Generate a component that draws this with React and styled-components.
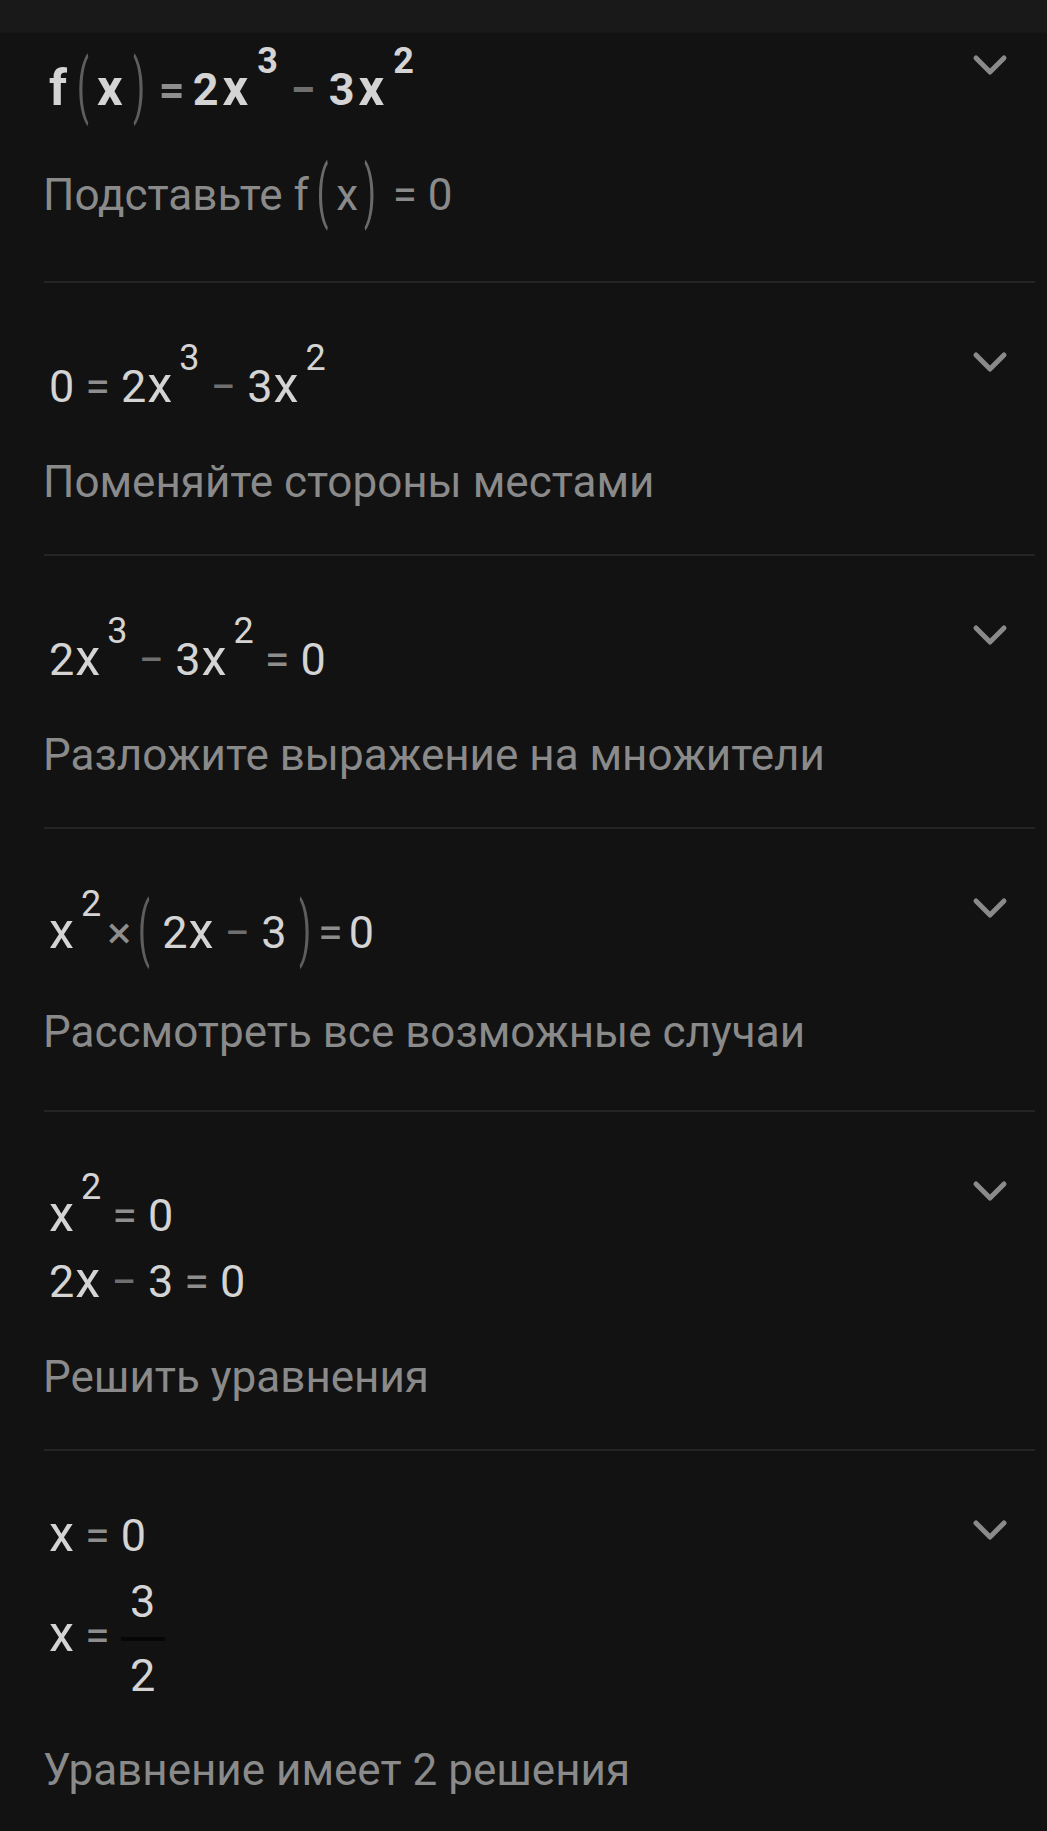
import React from "react";
import styled, { createGlobalStyle } from "styled-components";

const Global = createGlobalStyle`
	html, body {
		margin: 0;
		padding: 0;
		background: #121212;
	}
	body {
		font-family: Roboto, "Noto Sans", "Liberation Sans", sans-serif;
	}
`;

const Page = styled.div`
	width: 1047px;
	min-height: 1831px;
	background: #121212;
	overflow: hidden;
`;

const TopBar = styled.div`
	height: 32px;
	background: #191919;
	border-bottom: 1px solid #161616;
`;

const Steps = styled.div`
	display: flex;
	flex-direction: column;
`;

const Step = styled.div`
	margin: 0 12px 0 44px;
	padding: ${(p) => p.$pt}px 0 ${(p) => p.$pb}px;
	border-bottom: ${(p) => (p.$last ? "none" : "2px solid #242424")};
`;

const Head = styled.div`
	display: flex;
	align-items: flex-start;
	justify-content: space-between;
`;

const Lines = styled.div`
	display: flex;
	flex-direction: column;
	gap: 10px;
	padding-left: 5px;
`;

const Line = styled.div`
	font-size: 45px;
	line-height: 56px;
	color: #d4d4d4;
	font-weight: ${(p) => (p.$bold ? 700 : 400)};
	letter-spacing: ${(p) => (p.$bold ? 2 : 0)}px;
	white-space: nowrap;
`;

const Var = styled.span`
	font-size: 1.12em;
	line-height: 0;
	margin-left: ${(p) => p.$ml || 0}px;
`;

const Op = styled.span`
	color: ${(p) => (p.$dim ? "#6f6f6f" : "#8e8e8e")};
	margin: 0 ${(p) => (p.$tight ? 6 : 11)}px;
`;

const Sup = styled.span`
	display: inline-block;
	font-size: 0.8em;
	line-height: 1;
	vertical-align: 32px;
	margin-left: 7px;
`;

const Paren = styled.span`
	display: inline-block;
	font-size: 1.55em;
	font-weight: 400;
	line-height: 1;
	letter-spacing: 0;
	color: ${(p) => p.$color || "#5e5e5e"};
	transform: scaleX(0.5);
	margin: 0 ${(p) => p.$gap ?? -5}px;
	vertical-align: -5px;
`;

const Frac = styled.span`
	display: inline-flex;
	flex-direction: column;
	align-items: center;
	vertical-align: middle;
	line-height: 56px;
`;

const Bar = styled.span`
	width: 44px;
	height: 4px;
	margin: 7px 0;
	background: #060606;
`;

const Desc = styled.div`
	margin: ${(p) => p.$mt}px 0 0 -1px;
	font-size: 44px;
	line-height: 50px;
	color: #8a8a8a;
	white-space: nowrap;
`;

const Chevron = styled.svg`
	flex: none;
	width: 36px;
	height: 22px;
	margin: 11px 27px 0 0;
`;

const Down = () => (
	<Chevron viewBox="0 0 36 22">
		<polyline
			points="4,4 18,18 32,4"
			fill="none"
			stroke="#8a8a8a"
			strokeWidth="5"
			strokeLinecap="round"
			strokeLinejoin="round"
		/>
	</Chevron>
);

const steps = [
	{
		pt: 10,
		pb: 55,
		mt: 36,
		bold: true,
		lines: [
			<>
				<Var>f</Var>
				<Paren $gap={2}>(</Paren>
				<Var>x</Var>
				<Paren $gap={2}>)</Paren>
				<Op $tight>=</Op>2<Var $ml={2}>x</Var>
				<Sup>3</Sup>
				<Op $dim>−</Op>3<Var $ml={2}>x</Var>
				<Sup>2</Sup>
			</>,
		],
		desc: (
			<>
				Подставьте f<Paren $color="#6a6a6a" $gap={2}>(</Paren>x
				<Paren $color="#6a6a6a" $gap={0}>)</Paren> = 0
			</>
		),
	},
	{
		lines: [
			<>
				0<Op>=</Op>2<Var $ml={1}>x</Var>
				<Sup>3</Sup>
				<Op $dim>−</Op>3<Var $ml={1}>x</Var>
				<Sup>2</Sup>
			</>,
		],
		desc: "Поменяйте стороны местами",
	},
	{
		lines: [
			<>
				2<Var $ml={1}>x</Var>
				<Sup>3</Sup>
				<Op $dim>−</Op>3<Var $ml={1}>x</Var>
				<Sup>2</Sup>
				<Op>=</Op>0
			</>,
		],
		desc: "Разложите выражение на множители",
	},
	{
		pb: 53,
		lines: [
			<>
				<Var>x</Var>
				<Sup>2</Sup>
				<Op $tight>×</Op>
				<Paren>(</Paren>
				&nbsp;2<Var $ml={1}>x</Var>
				<Op $dim>−</Op>3&nbsp;
				<Paren>)</Paren>
				<Op $tight>=</Op>0
			</>,
		],
		desc: "Рассмотреть все возможные случаи",
	},
	{
		lines: [
			<>
				<Var>x</Var>
				<Sup>2</Sup>
				<Op>=</Op>0
			</>,
			<>
				2<Var $ml={1}>x</Var>
				<Op $dim>−</Op>3<Op>=</Op>0
			</>,
		],
		desc: "Решить уравнения",
	},
	{
		last: true,
		mt: 41,
		lines: [
			<>
				<Var>x</Var>
				<Op>=</Op>0
			</>,
			<>
				<Var>x</Var>
				<Op>=</Op>
				<Frac>
					<span>3</span>
					<Bar />
					<span>2</span>
				</Frac>
			</>,
		],
		desc: "Уравнение имеет 2 решения",
	},
];

const App = () => {
	return (
		<Page>
			<Global />
			<TopBar />
			<Steps>
				{steps.map((s, i) => (
					<Step key={i} $pt={s.pt ?? 57} $pb={s.pb ?? 47} $last={s.last}>
						<Head>
							<Lines>
								{s.lines.map((l, j) => (
									<Line key={j} $bold={s.bold}>
										{l}
									</Line>
								))}
							</Lines>
							<Down />
						</Head>
						<Desc $mt={s.mt ?? 42}>{s.desc}</Desc>
					</Step>
				))}
			</Steps>
		</Page>
	);
};

export default App;
